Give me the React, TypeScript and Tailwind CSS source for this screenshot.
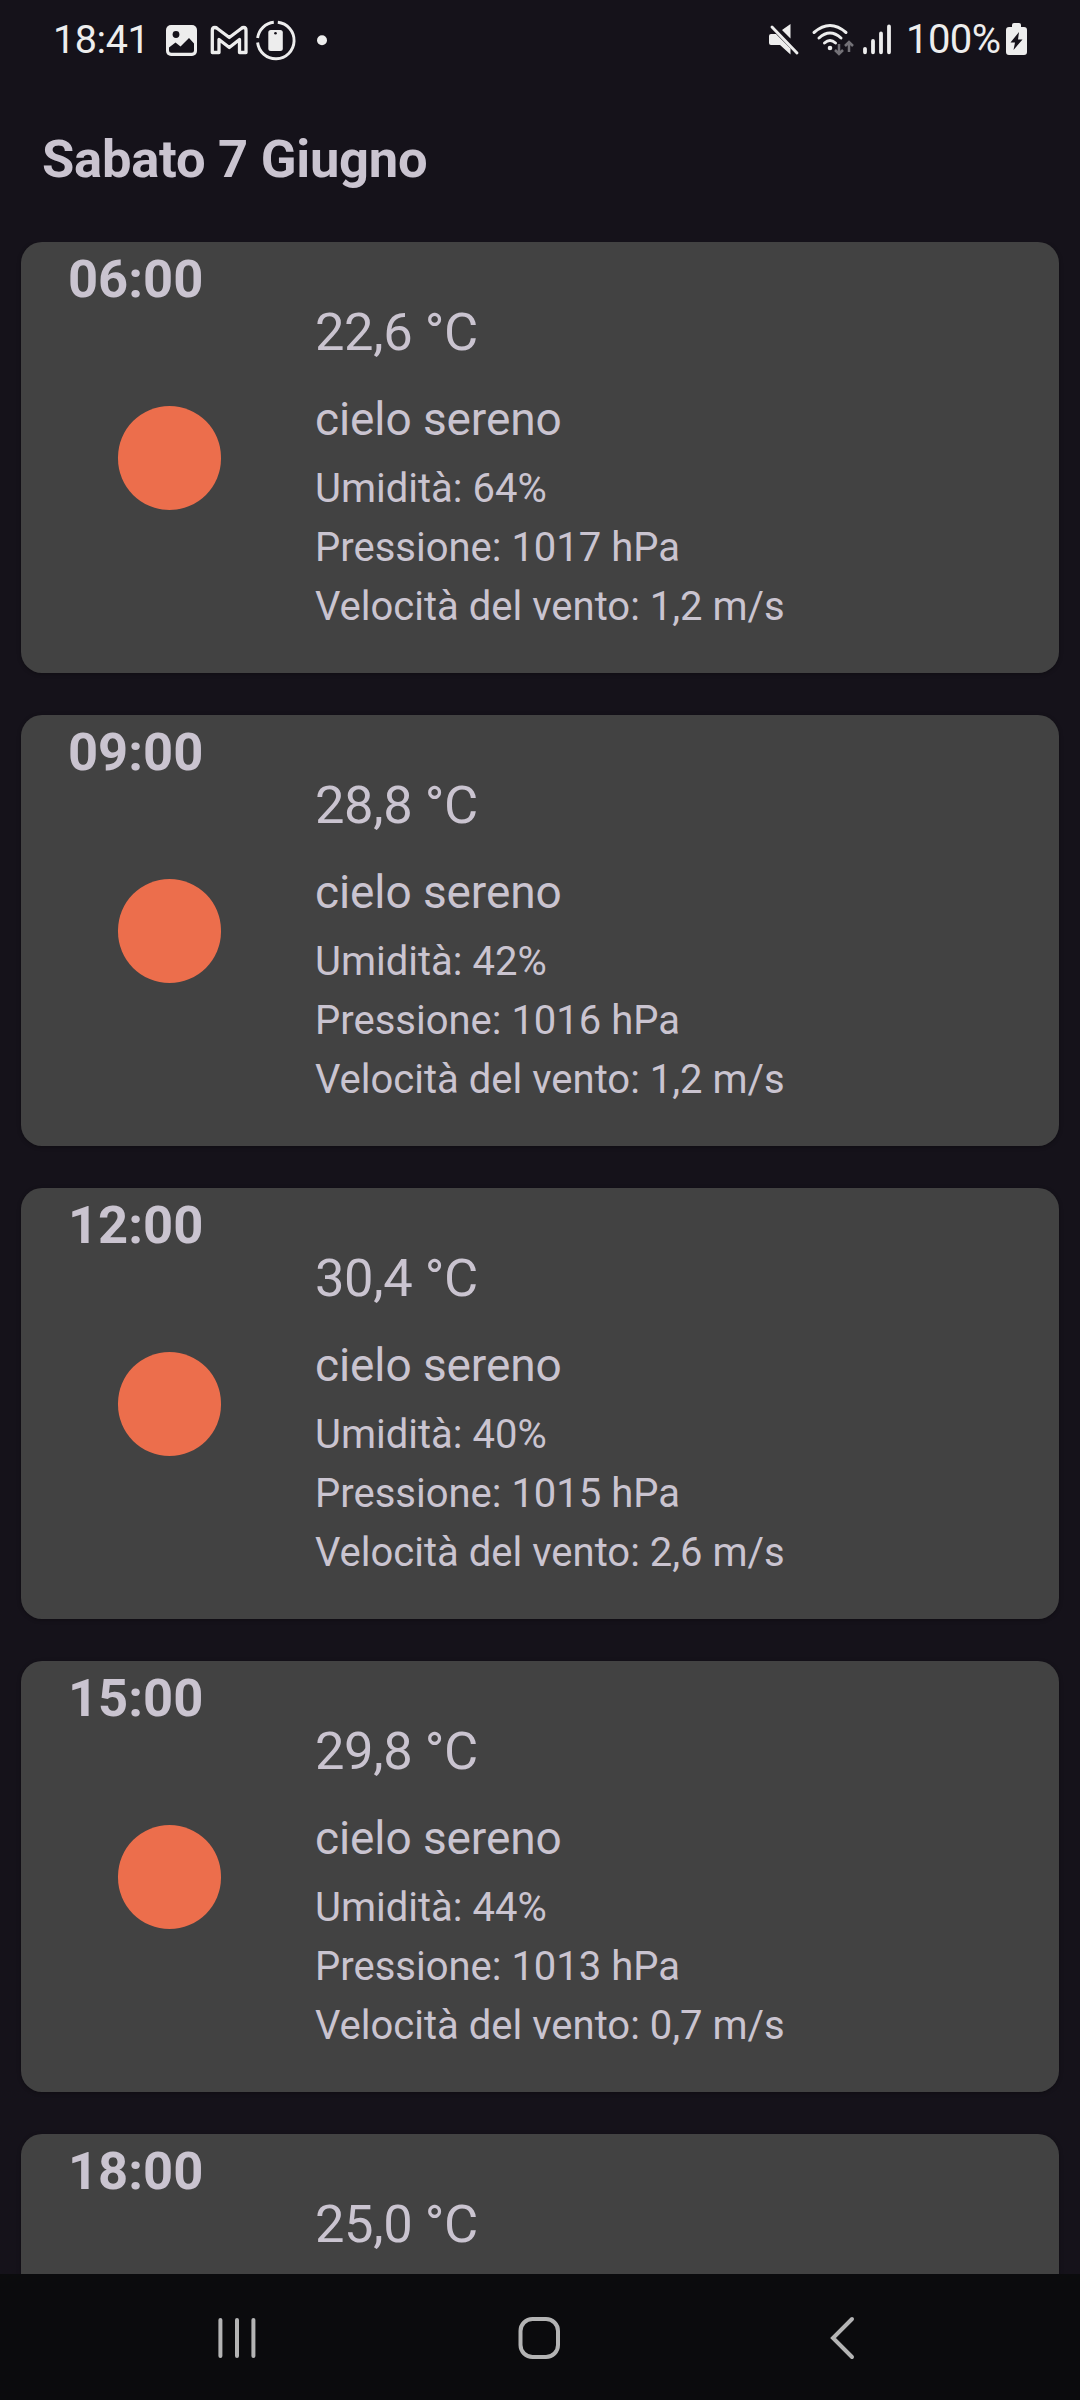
type Forecast = {
  time: string;
  temp: string;
  details?: { sky: string; humidity: number; pressure: number; wind: string };
};

const forecasts: Forecast[] = [
  { time: "06:00", temp: "22,6", details: { sky: "cielo sereno", humidity: 64, pressure: 1017, wind: "1,2" } },
  { time: "09:00", temp: "28,8", details: { sky: "cielo sereno", humidity: 42, pressure: 1016, wind: "1,2" } },
  { time: "12:00", temp: "30,4", details: { sky: "cielo sereno", humidity: 40, pressure: 1015, wind: "2,6" } },
  { time: "15:00", temp: "29,8", details: { sky: "cielo sereno", humidity: 44, pressure: 1013, wind: "0,7" } },
  { time: "18:00", temp: "25,0" },
];

function StatusBar() {
  return (
    <header className="flex h-20 shrink-0 items-center justify-between pr-[53px] pl-[53px] text-[#ededed]">
      <div className="flex items-center">
        <span className="w-[113px] text-[39.5px] leading-[80px] tracking-[-0.4px] whitespace-nowrap">18:41</span>
        <svg className="h-[60px] w-[170px]" viewBox="126 0 170 60" fill="none">
          <rect x="126" y="15" width="31" height="31" rx="5" fill="#ededed" />
          <circle cx="136" cy="24.5" r="3.4" fill="#15121a" />
          <path d="M129 37.500l6.500-5 5 4 8.500-8.500 5 5.500V40.500q0 2.300-2.300 2.300H131.300q-2.300 0-2.300-2.300z" fill="#15121a" />
          <path
            d="M172.300 42.500V20.500q0-3 2.500-3 1.500 0 2.500 1L189.300 27.500 201.300 18.500q1-1 2.500-1 2.200 0 2.200 3V42.500H199.500V29.500L189.300 37.500 179 29.500V42.500z"
            stroke="#ededed" strokeWidth="3.300" strokeLinejoin="round"
          />
          <path
            d="M217.600 28A18.300 18.300 0 0 1 233.800 12.300M237.800 12.300A18.300 18.300 0 1 1 217.600 32.500"
            stroke="#ededed" strokeWidth="2.900"
          />
          <rect x="228.300" y="20" width="14.500" height="21" rx="2.500" fill="#ededed" />
          <circle cx="235.500" cy="23.300" r="1.300" fill="#15121a" />
          <circle cx="282" cy="30.300" r="5" fill="#ededed" />
        </svg>
      </div>
      <div className="flex items-center">
        <svg className="h-[60px] w-[126px]" viewBox="16 0 126 60" fill="none">
          <path d="M40.500 14v14.500L32 20zM21 24h5l14.500 14.500V44.500L30 35h-9q-2 0-2-2v-7q0-2 2-2z" fill="#ededed" />
          <path d="M22 17l25 26" stroke="#ededed" strokeWidth="2.900" strokeLinecap="round" />
          <path
            d="M64 22.500q16-14 32 0M69 28q11-10 22 0M74.500 33q5.500-5 11 0"
            stroke="#ededed" strokeWidth="3" strokeLinecap="round"
          />
          <circle cx="80" cy="38" r="2.300" fill="#ededed" />
          <path d="M89 34v10m-4-4l4 4 4-4M99 42V32m-4 4l4-4 4 4" stroke="#737177" strokeWidth="2.500" />
          <path d="M115 38.800v3.500M123 31v11.300M131 23.500v18.800M139 16.500v25.800" stroke="#ededed" strokeWidth="3.800" strokeLinecap="round" />
        </svg>
        <span className="ml-[14px] w-[100px] text-[40px] leading-[80px] tracking-[-0.6px] whitespace-nowrap">100%</span>
        <svg className="h-[60px] w-[21px]" viewBox="0 0 21 60">
          <path d="M6 17v-2q0-2 2-2h5q2 0 2 2v2h3q3 0 3 3v22q0 3-3 3H3q-3 0-3-3V20q0-3 3-3z" fill="#ededed" />
          <path d="M13 22L4.500 32.500H9L7.500 40l9-10.500H12z" fill="#15121a" />
        </svg>
      </div>
    </header>
  );
}

function ForecastCard({ item }: { item: Forecast }) {
  return (
    <article className="flex h-[431px] shrink-0 rounded-[21px] bg-[#424242] shadow-[0_1px_4px_rgba(0,0,0,0.3)]">
      <div className="flex w-[294px] flex-col pl-[47px]">
        <div className="mt-[6px] text-[52.5px] leading-[62px] font-bold">{item.time}</div>
        <div className="mt-[96px] ml-[49.5px] size-[103.5px] rounded-full bg-[#ec6e4c]" />
      </div>
      <div className="flex flex-col whitespace-nowrap">
        <div className="mt-[59px] text-[52.5px] leading-[62px] tracking-[-0.4px]">{item.temp} °C</div>
        {item.details && (
          <>
            <div className="mt-[28px] text-[46px] leading-[56px] tracking-[-0.1px]">{item.details.sky}</div>
            <div className="mt-[12px] text-[40px] leading-[59px]">
              <div>Umidità: {item.details.humidity}%</div>
              <div>Pressione: {item.details.pressure} hPa</div>
              <div>Velocità del vento: {item.details.wind} m/s</div>
            </div>
          </>
        )}
      </div>
    </article>
  );
}

function NavigationBar() {
  return (
    <nav className="grid h-[126px] shrink-0 grid-cols-3 items-center bg-[#0b0b0d] px-[84px]">
      <svg className="h-[60px] w-20 justify-self-center" viewBox="0 0 80 60" fill="none" stroke="#b4b4b4" strokeWidth="4" strokeLinecap="round">
        <path d="M24.400 13v36M41 13v36M57.400 13v36" />
      </svg>
      <svg className="h-[60px] w-20 justify-self-center" viewBox="0 0 80 60" fill="none" stroke="#b4b4b4" strokeWidth="4">
        <rect x="20.500" y="12" width="37.500" height="38" rx="12" />
      </svg>
      <svg className="h-[60px] w-20 justify-self-center" viewBox="0 0 80 60" fill="none" stroke="#b4b4b4" strokeWidth="4" strokeLinecap="round">
        <path d="M48 12L29 31l19 19" />
      </svg>
    </nav>
  );
}

export default function App() {
  return (
    <div className="flex h-[2400px] w-[1080px] flex-col overflow-hidden bg-[#15121a] font-[Roboto,sans-serif] text-[#cac4d0]">
      <StatusBar />
      <h1 className="mt-[48px] mb-[52px] ml-[42px] text-[52.5px] leading-[62px] font-bold tracking-[-0.25px]">Sabato 7 Giugno</h1>
      <main className="flex min-h-0 flex-1 flex-col gap-[42px] overflow-hidden px-[21px]">
        {forecasts.map((item) => (
          <ForecastCard key={item.time} item={item} />
        ))}
      </main>
      <NavigationBar />
    </div>
  );
}
